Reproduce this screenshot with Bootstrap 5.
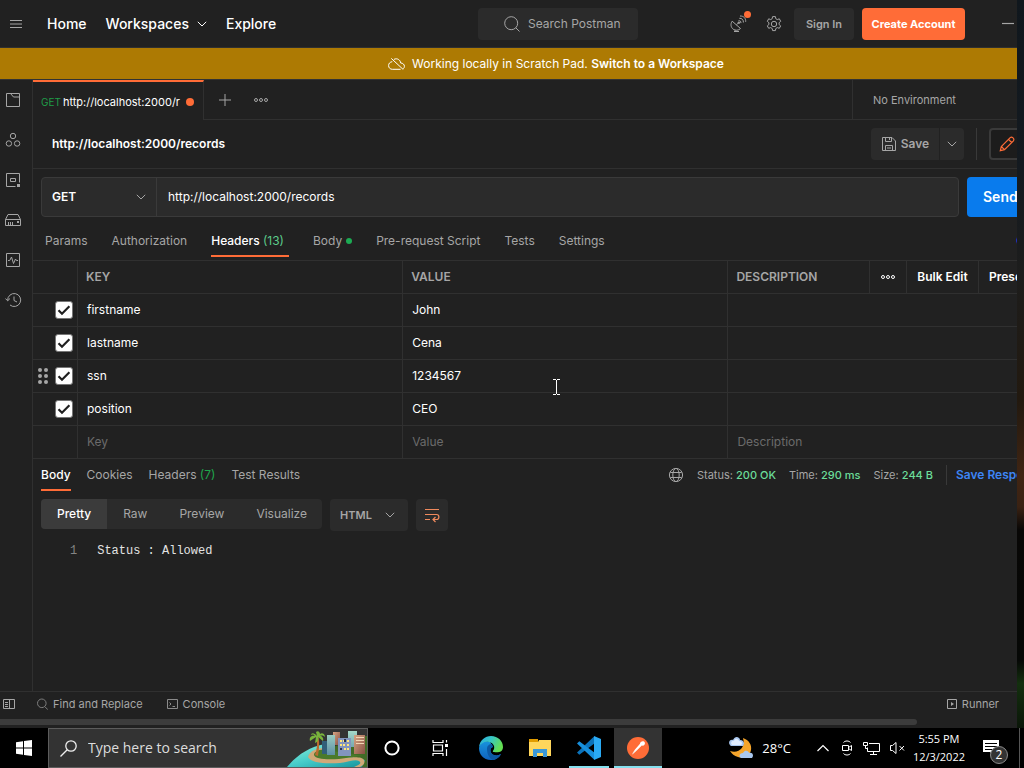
<!DOCTYPE html>
<html lang="en" data-bs-theme="dark">
<head>
<meta charset="utf-8">
<meta name="viewport" content="width=device-width, initial-scale=1">
<title>Postman</title>
<link rel="stylesheet" href="https://cdn.jsdelivr.net/npm/bootstrap@5.3.0/dist/css/bootstrap.min.css">
<style>
  :root { --dim: #a6a6a6; --faint: #6b6b6b; --line: #303030; --panel: #2b2b2b; --orange: #ff6c37; --green: #6bdd9a; }
  body { font-family: Inter, "Liberation Sans", sans-serif; font-size: 12px; line-height: 16px; color: var(--dim); background: #0d1216; }
  svg { display: block; flex: none; fill: none; stroke: currentColor; }
  a { color: inherit; text-decoration: none; }
  .desktop { background: linear-gradient(180deg, #10171d 0, #141a20 22%, #1d1d1c 36%, #22190f 52%, #402513 62%, #3a2213 66%, #080706 69%, #060806 86%, #14300f 89%, #0a1508 95%); }
  .app-window { background: #212121; margin-right: 7px; }
  .btn, .form-control, .form-select { font-size: 12px; line-height: 16px; }
  .line-b { border-bottom: 1px solid var(--line); }
  .line-r { border-right: 1px solid var(--line); }
  .line-l { border-left: 1px solid var(--line); }
  .fine { font-size: 11px; }

  .topbar { height: 48px; padding-left: 9px; }
  .topbar .nav-link { font-size: 14px; line-height: 20px; color: #fff; font-weight: 500; padding: 0; }
  .main-links { gap: 19px; margin-left: 24px; }
  .search-box { left: 47%; top: 8px; width: 160px; height: 32px; background: var(--panel); border-radius: 4px; padding-left: 26px; gap: 8px; }
  .search-box input { background: none; border: 0; padding: 0; width: 104px; color: var(--dim); outline: 0; }
  .search-box input::placeholder { color: var(--dim); opacity: 1; }
  .soft { background: var(--panel); color: var(--dim); border: 0; border-radius: 4px; font-weight: 600; height: 32px; padding: 0; }
  .signin { width: 60px; font-size: 11px; margin-left: 12px; }
  .satellite { margin-right: 19px; }
  .create { width: 103px; height: 32px; padding: 0; border: 0; border-radius: 4px; background: var(--orange); color: #fff; font-size: 11px; font-weight: 700; }
  .dot { width: 8px; height: 8px; border-radius: 50%; background: var(--orange); flex: none; }
  .alert-dot { top: -4px; right: -4px; width: 7px; height: 7px; }
  .banner { height: 31px; background: #ad7a03; color: #fff; gap: 7px; padding-left: 95px; }
  .banner a { font-weight: 600; }
  .under-banner { border-top: 1px solid #333; }

  .rail { width: 33px; padding: 12px 0 0 5px; gap: 24px; }
  .tabstrip { height: 40px; }
  .req-tab { width: 171px; border-top: 2px solid var(--orange); color: #fff; padding: 1px 9px 0 8px; gap: 2px; }
  .verb { color: #1f9c48; font-size: 10px; }
  .tab-tools { padding-left: 15px; gap: 23px; }
  .env { width: 165px; padding-left: 20px; }
  .title-row { height: 49px; padding-left: 19px; }
  .title-row h1 { font-size: 12px; line-height: 16px; color: #fff; font-weight: 600; }
  .save-main { width: 68px; }
  .save-more { width: 24px; margin-left: 1px; }
  .vr-line { width: 1px; background: #393939; }
  .title-row .vr-line { height: 32px; margin: 0 12px; }
  .edit-btn { width: 40px; height: 32px; border: 2px solid #3a3a3a; border-radius: 4px; background: #1c1c1c; color: var(--orange); padding: 0 0 0 8px; margin-right: -12px; }

  .url-row { padding: 8px 0 0 8px; gap: 8px; }
  .url-group { border: 1px solid #3a3a3a; border-radius: 4px; height: 40px; background: var(--panel); }
  .form-select.pick { background-image: url("data:image/svg+xml,%3csvg xmlns='http://www.w3.org/2000/svg' width='10' height='6' viewBox='0 0 10 6'%3e%3cpath fill='none' stroke='%23a6a6a6' d='M.8.8 5 5 9.2.8'/%3e%3c/svg%3e"); background-size: 10px 6px; }
  .url-group .form-select { width: 115px; border: 0; border-right: 1px solid #3a3a3a; border-radius: 0; background-color: transparent; color: #fff; font-weight: 600; padding: 0 11px 0 10px; flex: none; background-position: right 10px center; }
  .url-group .form-control { border: 0; background: transparent; color: #fff; padding: 0 11px; border-radius: 0; }
  .send { width: 78px; height: 40px; margin-right: -28px; background: #097bed; color: #fff; border: 0; border-radius: 4px; font-size: 14px; font-weight: 600; text-align: left; padding: 0 0 0 16px; }
  .req-tabs { height: 43px; padding-left: 12px; gap: 24px; }
  .plain-tab { color: var(--dim); padding: 0; border: 0; background: none; }
  .req-tabs .plain-tab { padding: 16px 0 6px; height: 40px; border-bottom: 2px solid transparent; }
  .req-tabs .plain-tab.active { padding-right: 5px; }
  .plain-tab.active { color: #fff; font-weight: 500; border-color: var(--orange) !important; }
  .num { color: #5ccb8b; font-weight: 400; } .num-dark { color: #1fa64c; }
  .mini-dot { width: 6px; height: 6px; background: #1cab53; }
  .cookies-link { color: #2a56ff; width: 8px; margin-right: -7px; overflow: hidden; padding-top: 16px; }

  .params { table-layout: fixed; margin: 0; color: #fff; border-collapse: separate; border-spacing: 0; border-top: 1px solid var(--line); }
  .params th, .params td { height: 33px; padding: 0 8px; border: 0; border-bottom: 1px solid var(--line); border-right: 1px solid var(--line); vertical-align: middle; background: none; overflow: hidden; white-space: nowrap; font-weight: 400; }
  .params th { color: var(--dim); font-weight: 600; }
  .params td:last-child, .params th:last-child { border-right: 0; }
  .params tbody td { padding-left: 9px; }
  .params input[type=text] { border: 0; background: none; padding: 0; width: 100%; height: 16px; color: #fff; display: block; outline: 0; }
  .params input::placeholder { color: var(--faint); opacity: 1; }
  .params tbody td.tick { padding: 0 4px 0 4px; }
  .params .bold-btn { color: #fff; font-weight: 600; padding: 0; border: 0; background: none; }
  .c-tick { width: 45px; } .c-wide { width: 33.05%; } .c-dots { width: 37px; } .c-bulk { width: 72px; } .c-preset { width: 38px; }
  .params th.preset { padding: 0 0 0 10px; }
  .form-check-input.box { width: 18px; height: 18px; margin: 0; float: none; display: block; border-radius: 3px; border: 1px solid #777; }
  .form-check-input.box:checked { background-color: #fff; border-color: #777;
    --bs-form-check-bg-image: url("data:image/svg+xml,%3csvg xmlns='http://www.w3.org/2000/svg' viewBox='0 0 16 16'%3e%3cpath fill='none' stroke='%23212121' stroke-width='2.2' d='M2.5 8.2 6 11.7 13.4 4.2'/%3e%3c/svg%3e"); }
  .cursor-mark { left: 53%; top: 119px; margin-left: -2px; color: #fff; }

  .resp-tabs { height: 32px; padding-left: 8px; gap: 16px; }
  .resp-tabs .plain-tab { height: 32px; padding: 8px 0 6px; border-bottom: 2px solid transparent; }
  .meta { gap: 13px; }
  .meta .vr-line { height: 20px; }
  .ok { color: var(--green); font-weight: 500; }
  .save-resp { color: #3d85f5; font-size: 12px; font-weight: 600; margin-left: -4px; margin-right: -21px; width: 82px; white-space: nowrap; overflow: hidden; }
  .view-row { padding: 8px 0 0 8px; gap: 8px; }
  .views { background: var(--panel); border-radius: 4px; overflow: hidden; height: 30px; }
  .views .btn { border: 0; border-radius: 0; padding: 0 16px; color: var(--dim); }
  .views .btn.active { background: #3b3b3b; color: #fff; font-weight: 500; }
  .views .btn:last-child { padding-right: 15px; }
  .lang { width: 78px; height: 32px; border: 0; border-radius: 4px; color: var(--dim); font-size: 11px; font-weight: 600; padding: 0 10px; background-color: var(--panel); background-position: right 13px center; }
  .wrap-btn { width: 32px; color: #f08a5d; }
  .code { font-family: "Liberation Mono", monospace; font-size: 12px; line-height: 18px; color: #e3e3e3; padding: 11px 0 0 37px; gap: 20px; margin: 0; }
  .line-no { color: #858585; }
  .code code { font: inherit; color: inherit; }
  .statusbar { height: 27px; border-top: 1px solid var(--line); padding: 0 18px 2px 3px; font-size: 11px; gap: 24px; }
  .statusbar > svg { margin-right: -2px; }
  .statusbar a { gap: 5px; }
  .scroll-lane { height: 10px; padding-top: 1px; }
  .scroll-thumb { width: calc(100% - 100px); height: 6px; background: #3c3c3c; border-radius: 0 3px 3px 0; }

  .taskbar { height: 40px; background: #000; color: #fff; font-family: "Open Sans", "Noto Sans", sans-serif; }
  .start { width: 48px; border: 0; background: none; color: #fff; padding: 0 0 0 16px; }
  .win-search { width: 320px; background: #333; border: 1px solid #5c5c5c; padding-left: 11px; gap: 11px; overflow: hidden; }
  .win-search input { border: 0; background: none; padding: 0; width: 190px; font-size: 14px; line-height: 20px; color: #ddd; outline: 0; }
  .win-search input::placeholder { color: #ddd; opacity: 1; }
  .scene { right: 0; bottom: 0; }
  .task { width: 48px; flex: none; border: 0; background: none; color: #fff; padding: 0; display: flex; align-items: center; justify-content: center; border-bottom: 2px solid transparent; border-top: 2px solid transparent; }
  .task.edge { width: 54px; } .task.files { width: 44px; }
  .task.running { border-bottom-color: #85dfee; width: 40px; margin: 0 5px 0 7px; }
  .task.current { background: #333; border-top-color: #333; border-bottom-color: #85dfee; }
  .tray { gap: 10px; }
  .tray-text { font-size: 13px; line-height: 18px; margin: 0 16px 0 -2px; }
  .clock { font-size: 11px; line-height: 18px; margin-left: -3px; }
  .notes { width: 24px; height: 24px; margin: 0 2px 0 8px; }
  .notes svg { margin-top: 4px; }
  .notes-count { left: 7px; top: 10px; width: 18px; height: 18px; border-radius: 50%; background: #333; border: 1px solid #8a8a8a; font-size: 12px; line-height: 16px; text-align: center; }
  .peek { width: 5px; border-left: 1px solid #555; }
</style>
</head>
<body>
<div class="desktop d-flex flex-column vh-100 overflow-hidden">
  <div class="app-window d-flex flex-column flex-grow-1 overflow-hidden">

    <header class="topbar d-flex align-items-center position-relative line-b">
      <svg width="14" height="10" viewBox="0 0 14 10"><path d="M1 1.500h12M1 5h12M1 8.500h12"/></svg>
      <nav class="nav main-links">
        <a class="nav-link" href="#">Home</a>
        <a class="nav-link d-flex align-items-center gap-2" href="#">Workspaces
          <svg width="10" height="6" viewBox="0 0 10 6"><path d="M.8.8 5 5 9.2.8"/></svg></a>
        <a class="nav-link" href="#">Explore</a>
      </nav>
      <label class="search-box d-flex align-items-center position-absolute">
        <svg width="16" height="16" viewBox="0 0 16 16"><circle cx="7.2" cy="7.2" r="6.5"/><path d="m11.8 11.8 3.700 3.700"/></svg>
        <input type="text" placeholder="Search Postman" aria-label="Search Postman">
      </label>
      <div class="d-flex align-items-center ms-auto">
        <span class="satellite position-relative">
          <svg width="17" height="17" viewBox="0 0 17 17"><path d="M2.200 6.200c-2 2.700-1.300 6.300 1 8 2.200 1.600 5.300 1.400 7.300-.7zM6.400 9.900l2.400-2.400M5.500 15.300l-1.500 1.200h5M8.500 5.700c1.600-.3 2.700.8 2.400 2.400M9.300 3.300c2.600-.2 4.300 1.500 4.100 4.200M10 1c3.700-.1 5.900 2.200 5.700 5.800"/><circle cx="8.900" cy="7.700" r=".8" fill="currentColor"/></svg>
          <span class="dot alert-dot position-absolute"></span>
        </span>
        <svg width="16" height="16" viewBox="0 0 16 16"><circle cx="8" cy="8" r="2.700"/><path d="m6.600.6 2.800 0 .4 2.100 1.500.9 2-.8 1.400 2.500-1.600 1.400v1.800l1.600 1.400-1.400 2.400-2-.7-1.500.9-.4 2.100H6.600l-.4-2.100-1.500-.9-2 .7-1.400-2.400 1.600-1.400V6.700L1.300 5.300l1.400-2.500 2 .8 1.500-.9z"/></svg>
        <button class="btn soft signin">Sign In</button>
        <button class="btn create ms-2">Create Account</button>
        <svg class="ms-4" width="28" height="12" viewBox="0 0 28 12"><path stroke-width="1.200" d="M13 5.500h12"/></svg>
      </div>
    </header>

    <div class="banner d-flex align-items-center justify-content-center">
      <svg width="17" height="12" viewBox="0 0 17 12"><path d="M4.300 3.700C2 3.900.6 5.500.6 7.600c0 2.200 1.600 3.700 3.800 3.700h8.200M5.900 1.400C9.100-.2 12.300 1.700 12.700 5c2.200.1 3.700 1.400 3.700 3.300 0 1-.4 1.800-1.100 2.400M3.300.4l12 11.200"/></svg>
      <span>Working locally in Scratch Pad. <a href="#">Switch to a Workspace</a></span>
    </div>

    <div class="under-banner d-flex flex-grow-1 overflow-hidden">
      <aside class="rail d-flex flex-column line-r flex-shrink-0">
        <svg width="16" height="16" viewBox="0 0 16 16"><path d="M1.500 1.500h13v13h-13zM5.500 1.500l3 3.500h6"/></svg>
        <svg width="16" height="16" viewBox="0 0 16 16"><circle cx="8" cy="4" r="2.700"/><circle cx="3.900" cy="11.500" r="2.700"/><circle cx="12.100" cy="11.500" r="2.700"/></svg>
        <svg width="16" height="16" viewBox="0 0 16 16"><path d="M10.500 14.500h-9v-13h13v9M5.500 6.500h5v3h-5z"/><path fill="currentColor" stroke="none" d="M12 12h3v3h-3z"/></svg>
        <svg width="16" height="16" viewBox="0 0 16 16"><path d="M.5 7.500 3 2.500h10l2.500 5v6H.5zM.5 7.500h15M3.500 10v3M5.500 10v3M7.500 10v3"/><path fill="currentColor" stroke="none" d="M12 9h2v2h-2z"/></svg>
        <svg width="16" height="16" viewBox="0 0 16 16"><path d="M1.500 1.500h13v13h-13zM3 8.500h1.700L6.500 5l2 6.500 2-4.500 1 1.500H13"/></svg>
        <svg width="17" height="16" viewBox="0 0 17 16"><path d="M2.700 8.500A6.500 6.500 0 1 1 5 13M.4 6.500l2.300 2.300L5 6.500M9 4.500v4l3 1.500"/></svg>
      </aside>

      <main class="d-flex flex-column flex-grow-1 overflow-hidden">
        <div class="tabstrip d-flex">
          <a class="req-tab fine d-flex align-items-center line-r" href="#"><span class="verb">GET</span><span class="text-nowrap">http://localhost:2000/r</span><span class="dot ms-auto"></span></a>
          <div class="tab-tools d-flex align-items-center flex-grow-1 line-b">
            <svg width="12" height="12" viewBox="0 0 12 12"><path d="M6 0v12M0 6h12"/></svg>
            <svg width="14" height="6" viewBox="0 0 14 6"><circle cx="2" cy="3" r="1.500"/><circle cx="7" cy="3" r="1.500"/><circle cx="12" cy="3" r="1.500"/></svg>
          </div>
          <div class="env fine d-flex align-items-center line-l line-b">No Environment</div>
        </div>

        <div class="title-row d-flex align-items-center line-b">
          <h1 class="m-0">http://localhost:2000/records</h1>
          <button class="btn soft save-main ms-auto d-flex align-items-center justify-content-center rounded-end-0"><svg class="me-1" width="16" height="16" viewBox="0 0 16 16"><path d="M1.500 1.500h9.500l3.500 3.500v9.500h-13zM4.500 1.500v4h6v-4M8.500 2v2M4.500 14.500v-5h7v5M6 12h4"/></svg>Save</button>
          <button class="btn soft save-more d-flex align-items-center justify-content-center rounded-start-0" aria-label="More save options"><svg width="10" height="6" viewBox="0 0 10 6"><path d="M.8.8 5 5 9.2.8"/></svg></button>
          <span class="vr-line"></span>
          <button class="btn edit-btn d-flex align-items-center" aria-label="Edit"><svg width="16" height="16" viewBox="0 0 16 16"><path stroke-width="1.200" d="m1.300 14.700 1-4.200L11.200 1.600c1.700-1.500 4.700 1.200 3.200 3.200L5.500 13.700zM2.300 10.500l3.200 3.200M9.500 3.300l3.200 3.200"/></svg></button>
        </div>

        <div class="url-row d-flex">
          <div class="url-group d-flex flex-grow-1 overflow-hidden">
            <select class="form-select pick" aria-label="Method"><option>GET</option><option>POST</option></select>
            <input class="form-control" type="text" value="http://localhost:2000/records" aria-label="Request URL">
          </div>
          <button class="btn send">Send</button>
        </div>

        <div class="req-tabs d-flex flex-shrink-0">
          <a class="plain-tab" href="#">Params</a>
          <a class="plain-tab" href="#">Authorization</a>
          <a class="plain-tab active" href="#">Headers <span class="num">(13)</span></a>
          <a class="plain-tab d-flex align-items-center gap-1" href="#">Body<span class="dot mini-dot"></span></a>
          <a class="plain-tab" href="#">Pre-request Script</a>
          <a class="plain-tab" href="#">Tests</a>
          <a class="plain-tab" href="#">Settings</a>
          <a class="cookies-link ms-auto" href="#">Cookies</a>
        </div>

        <div class="position-relative">
        <table class="table params w-100">
          <colgroup><col class="c-tick"><col class="c-wide"><col class="c-wide"><col><col class="c-dots"><col class="c-bulk"><col class="c-preset"></colgroup>
          <thead><tr><th></th><th>KEY</th><th>VALUE</th><th>DESCRIPTION</th>
            <th class="p-0"><svg class="mx-auto text-white" width="14" height="6" viewBox="0 0 14 6"><circle cx="2" cy="3" r="1.500"/><circle cx="7" cy="3" r="1.500"/><circle cx="12" cy="3" r="1.500"/></svg></th>
            <th class="p-0 text-center"><button class="bold-btn">Bulk Edit</button></th><th class="preset"><button class="bold-btn">Presets</button></th></tr></thead>
          <tbody>
            <tr><td class="tick"><input class="form-check-input box ms-auto me-0" type="checkbox" checked aria-label="Use firstname"></td><td>firstname</td><td>John</td><td colspan="4"></td></tr>
            <tr><td class="tick"><input class="form-check-input box ms-auto me-0" type="checkbox" checked aria-label="Use lastname"></td><td>lastname</td><td>Cena</td><td colspan="4"></td></tr>
            <tr><td class="tick"><div class="d-flex align-items-center"><svg width="12" height="18" viewBox="0 0 12 18"><g fill="#a6a6a6" stroke="none"><circle cx="3" cy="3" r="2"/><circle cx="9" cy="3" r="2"/><circle cx="3" cy="9" r="2"/><circle cx="9" cy="9" r="2"/><circle cx="3" cy="15" r="2"/><circle cx="9" cy="15" r="2"/></g></svg><input class="form-check-input box ms-auto" type="checkbox" checked aria-label="Use ssn"></div></td><td>ssn</td><td>1234567</td><td colspan="4"></td></tr>
            <tr><td class="tick"><input class="form-check-input box ms-auto me-0" type="checkbox" checked aria-label="Use position"></td><td>position</td><td>CEO</td><td colspan="4"></td></tr>
            <tr><td></td><td><input type="text" placeholder="Key" aria-label="Key"></td><td><input type="text" placeholder="Value" aria-label="Value"></td><td colspan="4"><input type="text" placeholder="Description" aria-label="Description"></td></tr>
          </tbody>
        </table>
        <svg class="cursor-mark position-absolute" width="7" height="16" viewBox="0 0 7 16"><path d="M0 .5h3M4 .5h3M3.500 1v14M0 15.500h3M4 15.500h3"/></svg>
        </div>

        <div class="resp-tabs d-flex align-items-center flex-shrink-0">
          <a class="plain-tab active" href="#">Body</a>
          <a class="plain-tab" href="#">Cookies</a>
          <a class="plain-tab" href="#">Headers <span class="num-dark">(7)</span></a>
          <a class="plain-tab" href="#">Test Results</a>
          <div class="meta fine d-flex align-items-center ms-auto text-nowrap">
            <svg width="16" height="16" viewBox="0 0 16 16"><circle cx="8" cy="8" r="6.600"/><ellipse cx="8" cy="8" rx="3.200" ry="6.600"/><path d="M2.300 5.500h11.400M2.300 10.500h11.400"/></svg>
            <span>Status: <span class="ok">200 OK</span></span>
            <span>Time: <span class="ok">290 ms</span></span>
            <span>Size: <span class="ok">244 B</span></span>
            <span class="vr-line"></span>
            <a class="save-resp" href="#">Save Response</a>
          </div>
        </div>

        <div class="view-row d-flex align-items-start">
          <div class="views d-flex">
            <button class="btn active">Pretty</button><button class="btn">Raw</button><button class="btn">Preview</button><button class="btn">Visualize</button>
          </div>
          <select class="form-select pick lang" aria-label="Body format"><option>HTML</option><option>JSON</option></select>
          <button class="btn soft wrap-btn d-flex align-items-center justify-content-center" aria-label="Wrap lines"><svg width="16" height="16" viewBox="0 0 16 16"><path stroke-width="1.200" d="M1 2.500h14M1 7.500h11.500c3.200 0 3.200 5 0 5H9.500M1 12.500h5M11.500 10l-2.500 2.500 2.500 2.500"/></svg></button>
        </div>
        <pre class="code d-flex"><span class="line-no">1</span><code>Status : Allowed</code></pre>
      </main>
    </div>

    <footer class="statusbar d-flex align-items-center flex-shrink-0">
      <svg width="12" height="10" viewBox="0 0 12 10"><path d="M.5.5h11v9H.5zM6.500.5v9M2 3.500h3M2 5.500h3M2 7.500h3"/></svg>
      <a class="d-flex align-items-center" href="#"><svg width="11" height="12" viewBox="0 0 11 12" opacity=".7"><circle cx="4.800" cy="5.300" r="4.300"/><path d="m7.900 8.700 3 3"/></svg>Find and Replace</a>
      <a class="d-flex align-items-center" href="#"><svg width="11" height="10" viewBox="0 0 11 10" opacity=".8"><path d="M.5.5h10v9H.5zM2.500 3.500 4 5 2.500 6.500M5.500 7.500H8"/></svg>Console</a>
      <a class="d-flex align-items-center ms-auto" href="#"><svg width="10" height="10" viewBox="0 0 10 10"><path d="M.5.5h9v9h-9z"/><path fill="currentColor" stroke="none" d="M4 3v4l3-2z"/></svg>Runner</a>
    </footer>
    <div class="scroll-lane flex-shrink-0"><div class="scroll-thumb"></div></div>
  </div>

  <div class="taskbar d-flex flex-shrink-0">
    <button class="start" aria-label="Start"><svg width="16" height="16" viewBox="0 0 16 16" style="fill:#fff;stroke:none"><path d="M0 2.300 7 1.300V7.500H0zM8 1.100 16 0v7.500H8zM0 8.500h7v6.200l-7-1zM8 8.500h8V16l-8-1.100z"/></svg></button>
    <label class="win-search d-flex align-items-center position-relative flex-shrink-0">
      <svg width="17" height="17" viewBox="0 0 17 17"><circle cx="11" cy="6" r="5.200" stroke="#eee" stroke-width="1.300"/><path stroke="#eee" stroke-width="1.300" d="M7.200 9.800.5 16.500"/></svg>
      <input type="text" placeholder="Type here to search" aria-label="Type here to search">
      <svg class="scene position-absolute" width="80" height="37" viewBox="0 0 80 37" style="stroke:none">
        <defs>
          <linearGradient id="sea" x1="0" y1="0" x2="1" y2="1"><stop offset="0" stop-color="#8ff0da"/><stop offset=".5" stop-color="#45cbc9"/><stop offset="1" stop-color="#16939c"/></linearGradient>
          <linearGradient id="glass" x1="0" y1="0" x2="0" y2="1"><stop offset="0" stop-color="#a5d9c8"/><stop offset="1" stop-color="#5e8fa5"/></linearGradient>
          <linearGradient id="clay" x1="0" y1="0" x2="1" y2="1"><stop offset="0" stop-color="#d8a583"/><stop offset="1" stop-color="#875044"/></linearGradient>
        </defs>
        <path fill="#416b27" d="M37 20 78 6h2v31H48z"/>
        <path fill="url(#sea)" d="M0 37C10 25 22 17 38 14l-2 8 42 8-3 7z"/>
        <path fill="#d0a978" d="M21 27c2-7 10-9 17-9l-1 6 8 3c9 3 29-3 32 3 2 4-3 7-5 7h-5c6-2 8-4 5-6-4-2-10 1-19 2-15 1-29 0-32-6z"/>
        <path fill="#4a7a2a" d="M27 25c0-4 6-6 13-5l36 6c-7 0-14 2-24 3-13 1-24 0-25-4z"/>
        <path fill="#315f79" d="M35 11h7v13h-7z"/><path fill="url(#clay)" d="M46 2h7v13h-7z"/><path fill="url(#glass)" d="M61 1h9v16h-9zM40 5h8v20h-8z"/>
        <path fill="#8295be" d="M51 8h13v18H51z"/><path fill="url(#clay)" d="M67 5h11v19H67z"/>
        <path fill="#ffe77d" d="M53 10h2v2h-2zm3 0h2v2h-2zm4 0h2v2h-2zm-7 4h2v2h-2zm3 0h2v2h-2zm4 0h2v2h-2zm-3 4h2v2h-2zm3 0h2v2h-2z"/>
        <path fill="#2b3451" d="M57 9h2v3h-2zM53 18h2v2h-2z"/><path fill="#f2d7b6" d="M69 7h8v1h-8zm0 3h8v1h-8zm0 3h8v1h-8z"/>
        <path fill="#b96b2e" d="m29 7 2-1c2 6 1 13 0 20l-3-1c2-6 3-12 1-18z"/>
        <path fill="#79b43c" d="M30 6c-3-4-6-3-6-1 2-1 3 0 4 1-4-1-6 2-5 5l6-4-1 6c3-1 4-4 3-6 2 1 3 3 5 4 1-3-1-5-3-5 2-1 4 0 5 1 0-3-3-5-5-3 0-2-2-4-4-2z"/>
      </svg>
    </label>
    <button class="task" aria-label="Cortana"><svg width="16" height="16" viewBox="0 0 16 16"><circle cx="8" cy="8" r="6.600" stroke-width="2"/></svg></button>
    <button class="task" aria-label="Task view"><svg width="17" height="16" viewBox="0 0 17 16"><path d="M1 0v2.500h10V0M1 16v-2.500h10V16M1.500 5h9v6h-9zM14.500 0v2.500M14.500 9v7" stroke-width="1.200"/><path fill="currentColor" stroke="none" d="M13 4h3v3h-3z"/></svg></button>
    <button class="task edge" aria-label="Edge"><svg width="24" height="24" viewBox="0 0 24 24" style="stroke:none">
      <defs><linearGradient id="edgeTop" x1="0" y1="0" x2="1" y2=".4"><stop offset="0" stop-color="#2aa9e0"/><stop offset=".5" stop-color="#37c6c5"/><stop offset="1" stop-color="#64df52"/></linearGradient><linearGradient id="edgeLow" x1="0" y1="0" x2="0" y2="1"><stop offset="0" stop-color="#1893dd"/><stop offset="1" stop-color="#1062bd"/></linearGradient></defs>
      <path fill="url(#edgeLow)" d="M0 12C1 6 6 4 11 6l3 5c-4 1-3 7 1 8 3 1 5 0 7-1-2 4-6 6-10 6C4 24 0 18 0 12z"/>
      <path fill="#0c59a4" d="M8 13c0-3 2-5 5-5l1 3c-4 1-3 7 1 8 3 1 5 0 7-1-2 4-6 6-8 6-4-2-6-6-6-11z"/>
      <path fill="url(#edgeTop)" d="M0 11C1 4 6 0 12 0c7 0 12 5 12 11 0 5-5 6-9 5-2 0-1-1 0-3 1-3-1-6-5-7C6 5 2 7 0 11z"/></svg></button>
    <button class="task files" aria-label="File Explorer"><svg width="22" height="18" viewBox="0 0 22 18" style="stroke:none"><path fill="#ffd65c" d="M0 3h9l1-2h12v16H0z"/><path fill="#e19c00" d="M0 0h9v3H0z"/><path fill="#3b98d8" d="M4 10h14v8h-4v-4H8v4H4z"/></svg></button>
    <button class="task running" aria-label="Visual Studio Code"><svg width="24" height="24" viewBox="0 0 24 24" style="stroke:none"><path fill="#0b73bb" d="M0 16.500 17 .5v7.300L2.300 18.700z"/><path fill="#178fdc" d="m0 7.500 2.300-2.200L17 16.200v7.300z"/><path fill="#2aaaf4" d="m17 0 7 3v18l-7 3z"/></svg></button>
    <button class="task current" aria-label="Postman"><svg width="22" height="22" viewBox="0 0 22 22" style="stroke:none"><circle cx="11" cy="11" r="11" fill="#ff6c37"/><path fill="#fff" d="M13 6.700c0-2.500 4-3.500 4.800-1.200.7 2-1.200 3.600-3 3L10 13.300l-5 3.800 3-4.600z"/><path stroke="#fbd9c9" d="m10 13-4.500 4"/></svg></button>
    <div class="tray d-flex align-items-center ms-auto">
      <svg width="25" height="24" viewBox="0 0 25 24" style="stroke:none"><path fill="#f5a52b" d="M14 2c6 2 9 7 8 12-1 6-8 9-13 7-4-1-6-3-8-6 8 3 16-3 13-13z"/><path fill="#a9c7ef" d="M2 10C-2 7 1 3 4 4c2-5 7-3 7 0 4 0 5 4 3 6zM12 22c-3-2-1-5 2-5 2-4 6-2 6 0 4-1 5 3 3 5z"/><path fill="#e0edff" d="M3 9C1 7 3 4 5 5c1-4 5-2 5 0 3 0 4 3 2 4z"/></svg>
      <span class="tray-text text-nowrap">28°C</span>
      <svg width="12" height="8" viewBox="0 0 12 8"><path d="m.5 7 5.500-5.500L11.500 7" stroke-width="1.200"/></svg>
      <svg width="14" height="16" viewBox="-2 0 14 16"><path d="M1.500 5.500h6v5h-6zM7.500 7.500l3-2v5l-3-2M2.500 2.500C4 .5 8 .5 9.500 2.500M2.500 13.500c1.500 2 5.500 2 7 0"/></svg>
      <svg width="17" height="16" viewBox="0 0 17 16"><path d="M6 3.500h10.500v8H4.500v-4M10.500 11.500v3M7 14.500h7M.5 2.500h4v3h-4zM2.500 5.500v3h2"/></svg>
      <svg width="16" height="14" viewBox="2 0 16 14"><path d="M2.500 4.500h2l3.500-3v11l-3.500-3h-2zM11.500 5l4.500 4.500M16 5l-4.500 4.500"/></svg>
      <div class="clock text-center">5:55 PM<br>12/3/2022</div>
      <div class="notes position-relative"><svg width="16" height="17" viewBox="0 0 16 17" style="stroke:none"><path fill="#fff" d="M0 0h16v12h-5v4l-4-4H0z"/><path stroke="#000" d="M2 3.500h12M2 6.500h12M2 9.500h12"/></svg><span class="notes-count position-absolute">2</span></div>
      <span class="peek align-self-stretch"></span>
    </div>
  </div>
</div>
<script src="https://cdn.jsdelivr.net/npm/bootstrap@5.3.0/dist/js/bootstrap.bundle.min.js"></script>
</body>
</html>
